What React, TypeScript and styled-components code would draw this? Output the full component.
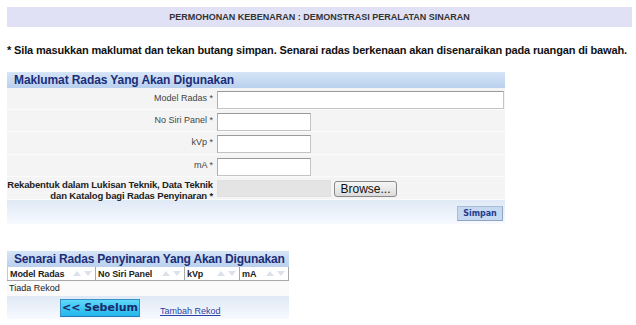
import React from 'react'
import styled, { createGlobalStyle } from 'styled-components'

const GlobalStyle = createGlobalStyle`
  html, body {
    margin: 0;
    padding: 0;
    background: #ffffff;
  }
  body {
    font-family: "Liberation Sans", Arial, sans-serif;
    color: #222;
  }
`

const Page = styled.div`
  width: 636px;
  height: 325px;
  padding: 7px 4px 0 7px;
  box-sizing: border-box;
  overflow: hidden;
`

const TitleBar = styled.div`
  height: 20px;
  background: #e1e1f5;
  display: flex;
  align-items: center;
  justify-content: center;
  font-size: 9px;
  font-weight: bold;
  color: #333;
`

const Instruction = styled.p`
  margin: 16px 0 15px 0;
  font-size: 11px;
  font-weight: bold;
  letter-spacing: -0.15px;
  line-height: 14px;
  color: #111;
  white-space: nowrap;
`

const Panel = styled.div<{ $width: number }>`
  width: ${(p) => p.$width}px;
`

const PanelHeader = styled.div<{ $spacing: number }>`
  height: 16px;
  line-height: 16px;
  padding-left: 7px;
  background: linear-gradient(#d6e5f7, #b9d0ee);
  color: #1b2d78;
  font-size: 12px;
  font-weight: bold;
  letter-spacing: ${(p) => p.$spacing}px;
  white-space: nowrap;
`

const FormRow = styled.div<{ $height: number }>`
  display: flex;
  height: ${(p) => p.$height}px;
  background: #f4f4f4;
  border-bottom: 1px solid #fbfbfb;
  box-sizing: border-box;
`

const Label = styled.div<{ $strong?: boolean }>`
  width: 210px;
  padding: ${(p) => (p.$strong ? '2px' : '5px')} 4px 0 0;
  box-sizing: border-box;
  display: flex;
  flex-direction: column;
  align-items: flex-end;
  font-size: ${(p) => (p.$strong ? 9.5 : 9)}px;
  font-weight: ${(p) => (p.$strong ? 'bold' : 'normal')};
  letter-spacing: ${(p) => (p.$strong ? '-0.15px' : '0')};
  line-height: ${(p) => (p.$strong ? 11 : 10)}px;
  color: ${(p) => (p.$strong ? '#222' : '#444')};
  white-space: nowrap;
`

const Field = styled.div`
  flex: 1;
  display: flex;
  align-items: flex-start;
  padding-top: 3px;
`

const TextInput = styled.input<{ $width: number }>`
  width: ${(p) => p.$width}px;
  height: 18px;
  box-sizing: border-box;
  border: 1px solid #c4c4c4;
  border-top-color: #9a9a9a;
  border-left-color: #b0b0b0;
  background: #fff;
  padding: 0 2px;
  margin: 0;
`

const FileBox = styled.div`
  width: 114px;
  height: 17px;
  background: #e4e4e4;
  border: 1px solid #e0e0e0;
  box-sizing: border-box;
`

const BrowseButton = styled.button`
  margin: 1px 0 0 3px;
  width: 63px;
  height: 16px;
  padding: 0;
  border: 1px solid #8a8a8a;
  border-radius: 3px;
  background: linear-gradient(#f6f6f6, #dcdcdc);
  font-family: "Liberation Sans", Arial, sans-serif;
  font-size: 12px;
  line-height: 14px;
  color: #111;
`

const FooterRow = styled.div<{ $height: number; $justify: string }>`
  height: ${(p) => p.$height}px;
  display: flex;
  align-items: center;
  justify-content: ${(p) => p.$justify};
  background: linear-gradient(#dfe9f6, #f7faff);
  box-sizing: border-box;
`

const SaveButton = styled.button`
  margin: 3px 2px 0 0;
  width: 46px;
  height: 15px;
  padding: 0;
  border: 1px solid #a9bcd6;
  border-right-color: #8ea5c4;
  border-bottom-color: #8ea5c4;
  background: #c7d9f0;
  font-family: "DejaVu Sans", Verdana, sans-serif;
  font-size: 8px;
  font-weight: bold;
  color: #1e3c8c;
`

const Gap = styled.div`
  height: 27px;
`

const GridHead = styled.div`
  display: grid;
  grid-template-columns: 89px 89px 55px 49px;
  height: 14px;
  background: #fff;
  border-bottom: 1px solid #a8a8a8;
  box-sizing: border-box;
`

const HeadCell = styled.div`
  display: flex;
  align-items: center;
  justify-content: space-between;
  padding: 0 0 0 2px;
  border-right: 1px solid #a8a8a8;
  font-size: 9px;
  font-weight: bold;
  letter-spacing: -0.1px;
  color: #222;
  white-space: nowrap;
  &:first-child {
    border-left: 1px solid #c8c8c8;
  }
`

const Arrows = styled.span`
  display: flex;
  gap: 3px;
  margin-right: 3px;
`

const EmptyRow = styled.div`
  height: 15px;
  line-height: 15px;
  padding-left: 2px;
  font-size: 9px;
  color: #222;
  background: #fafafa;
`

const BackButton = styled.button`
  width: 80px;
  height: 18px;
  padding: 0;
  margin-left: 53px;
  border: 1px solid #3a8fc7;
  border-bottom-color: #2777b3;
  background: linear-gradient(#5fd8fb, #22b7ec);
  font-family: "DejaVu Sans", Verdana, sans-serif;
  font-size: 11px;
  font-weight: bold;
  color: #1b2a6b;
`

const AddLink = styled.a`
  margin: 7px 0 0 20px;
  font-size: 9px;
  color: #2b41a3;
  text-decoration: underline;
`

function SortArrows() {
  return (
    <Arrows>
      <svg width="8" height="5" viewBox="0 0 8 5">
        <path d="M0 5 L4 0 L8 5 Z" fill="#dde2ea" />
      </svg>
      <svg width="8" height="5" viewBox="0 0 8 5">
        <path d="M0 0 L4 5 L8 0 Z" fill="#dde2ea" />
      </svg>
    </Arrows>
  )
}

const rows = [
  { label: 'Model Radas *', width: 287, height: 22 },
  { label: 'No Siri Panel *', width: 94, height: 22 },
  { label: 'kVp *', width: 94, height: 23 },
  { label: 'mA *', width: 94, height: 22 },
]

const columns = ['Model Radas', 'No Siri Panel', 'kVp', 'mA']

export default function App() {
  return (
    <Page>
      <GlobalStyle />
      <TitleBar>PERMOHONAN KEBENARAN : DEMONSTRASI PERALATAN SINARAN</TitleBar>
      <Instruction>
        * Sila masukkan maklumat dan tekan butang simpan. Senarai radas berkenaan akan disenaraikan pada ruangan di bawah.
      </Instruction>

      <Panel $width={498}>
        <PanelHeader $spacing={-0.1}>Maklumat Radas Yang Akan Digunakan</PanelHeader>
        {rows.map((r) => (
          <FormRow key={r.label} $height={r.height}>
            <Label>{r.label}</Label>
            <Field>
              <TextInput type="text" $width={r.width} />
            </Field>
          </FormRow>
        ))}
        <FormRow $height={23}>
          <Label $strong>
            <span>Rekabentuk dalam Lukisan Teknik, Data Teknik</span>
            <span>dan Katalog bagi Radas Penyinaran *</span>
          </Label>
          <Field>
            <FileBox />
            <BrowseButton>Browse...</BrowseButton>
          </Field>
        </FormRow>
        <FooterRow $height={24} $justify="flex-end">
          <SaveButton>Simpan</SaveButton>
        </FooterRow>
      </Panel>

      <Gap />

      <Panel $width={282}>
        <PanelHeader $spacing={-0.2}>Senarai Radas Penyinaran Yang Akan Digunakan</PanelHeader>
        <GridHead>
          {columns.map((c) => (
            <HeadCell key={c}>
              {c}
              <SortArrows />
            </HeadCell>
          ))}
        </GridHead>
        <EmptyRow>Tiada Rekod</EmptyRow>
        <FooterRow $height={23} $justify="flex-start">
          <BackButton>{'<< Sebelum'}</BackButton>
          <AddLink href="#">Tambah Rekod</AddLink>
        </FooterRow>
      </Panel>
    </Page>
  )
}
